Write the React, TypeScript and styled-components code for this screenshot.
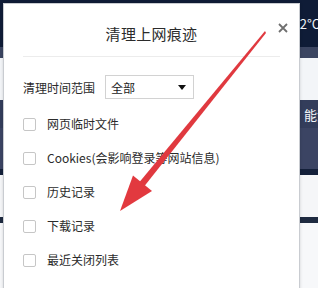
import React from "react";
import styled, { createGlobalStyle } from "styled-components";

const Global = createGlobalStyle`
  html, body { margin: 0; padding: 0; width: 318px; height: 288px; overflow: hidden; }
  body { font-family: "Noto Sans CJK SC", "Noto Sans", sans-serif; }
`;

const Stage = styled.div`
  position: relative;
  width: 318px;
  height: 288px;
  overflow: hidden;
`;

const Backdrop = styled.div`
  display: flex;
  flex-direction: column;
  width: 318px;
  height: 288px;
`;

const Band = styled.div<{ $bg: string; $h: number }>`
  height: ${(p) => p.$h}px;
  background: ${(p) => p.$bg};
  display: flex;
  align-items: center;
  justify-content: flex-end;
  color: #f2f4f8;
  font-size: 13px;
  overflow: hidden;
  white-space: nowrap;
`;

const BandText = styled.span<{ $shift: number }>`
  margin-right: ${(p) => p.$shift}px;
  font-family: "Noto Sans CJK SC", sans-serif;
  line-height: 1;
`;

const Dialog = styled.div`
  position: absolute;
  left: 3px;
  top: 3px;
  width: 297px;
  height: 300px;
  background: #ffffff;
  border: 1px solid #c9ccd1;
  box-shadow: 0 0 3px rgba(0, 0, 0, 0.15);
  padding: 0 19px 0 18px;
  box-sizing: border-box;
`;

const Header = styled.div`
  padding: 20px 0 12px;
  border-bottom: 1px solid #ececec;
  text-align: center;
  margin-left: 1px;
`;

const Title = styled.div`
  font-size: 15px;
  line-height: 20px;
  color: #2b2b2b;
  letter-spacing: 0.3px;
`;

const Close = styled.div`
  position: absolute;
  top: 10px;
  right: 11px;
  width: 10px;
  height: 10px;
`;

const TimeRow = styled.div`
  display: flex;
  align-items: center;
  margin-top: 18px;
  height: 24px;
`;

const Label = styled.span`
  font-size: 12px;
  color: #2b2b2b;
  width: 82px;
  margin-left: 1px;
  line-height: 1;
  padding-top: 2px;
`;

const Select = styled.div`
  width: 89px;
  height: 24px;
  box-sizing: border-box;
  border: 1px solid #d2d2d2;
  display: flex;
  align-items: center;
  justify-content: space-between;
  padding: 0 7px 0 5px;
  font-size: 12px;
  color: #222;
`;

const Caret = styled.span`
  width: 0;
  height: 0;
  border-left: 4px solid transparent;
  border-right: 4px solid transparent;
  border-top: 5px solid #111;
`;

const List = styled.div`
  display: flex;
  flex-direction: column;
  margin-top: 8px;
`;

const Row = styled.div`
  display: flex;
  align-items: center;
  height: 34px;
  padding-left: 1px;
`;

const Box = styled.span`
  width: 13px;
  height: 13px;
  box-sizing: border-box;
  border: 1px solid #c6c6c6;
  border-radius: 2px;
  background: #fff;
  margin-right: 11px;
`;

const RowText = styled.span`
  font-size: 12px;
  color: #2b2b2b;
  line-height: 1;
`;

const Arrow = styled.svg`
  position: absolute;
  left: 0;
  top: 0;
  pointer-events: none;
`;

const items = [
  "网页临时文件",
  "Cookies(会影响登录等网站信息)",
  "历史记录",
  "下载记录",
  "最近关闭列表",
  "其他",
];

export default function App() {
  return (
    <>
      <Global />
      <Stage>
        <Backdrop>
          <Band $bg="#0f1c37" $h={47}>
            <BandText $shift={-2}>2°C</BandText>
          </Band>
          <Band $bg="#3b4561" $h={11} />
          <Band $bg="#f3f5f8" $h={42} />
          <Band $bg="#333d5b" $h={28}>
            <BandText $shift={-12}>能源</BandText>
          </Band>
          <Band $bg="#3b4463" $h={41} />
          <Band $bg="#14203a" $h={6} />
          <Band $bg="#f5f6f8" $h={42} />
          <Band $bg="#1e2a40" $h={6} />
          <Band $bg="#f7f8fa" $h={65} />
        </Backdrop>
        <Dialog>
          <Close>
            <svg width="10" height="10" viewBox="0 0 10 10">
              <path d="M1 1L9 9M9 1L1 9" stroke="#6f6f6f" strokeWidth="1.8" />
            </svg>
          </Close>
          <Header>
            <Title>清理上网痕迹</Title>
          </Header>
          <TimeRow>
            <Label>清理时间范围</Label>
            <Select>
              <span>全部</span>
              <Caret />
            </Select>
          </TimeRow>
          <List>
            {items.map((t) => (
              <Row key={t}>
                <Box />
                <RowText>{t}</RowText>
              </Row>
            ))}
          </List>
        </Dialog>
        <Arrow width="318" height="288" viewBox="0 0 318 288">
          <defs>
            <linearGradient id="ag" x1="0" y1="0" x2="1" y2="0">
              <stop offset="0" stopColor="#c9262e" />
              <stop offset="0.5" stopColor="#ee4b4f" />
              <stop offset="1" stopColor="#c9262e" />
            </linearGradient>
          </defs>
          <polygon
            points="265,31 266,33 144.5,186 139.5,182"
            fill="#e0393f"
          />
          <polygon points="120,211 152,191 133,175.5" fill="#e2393f" />
        </Arrow>
      </Stage>
    </>
  );
}
